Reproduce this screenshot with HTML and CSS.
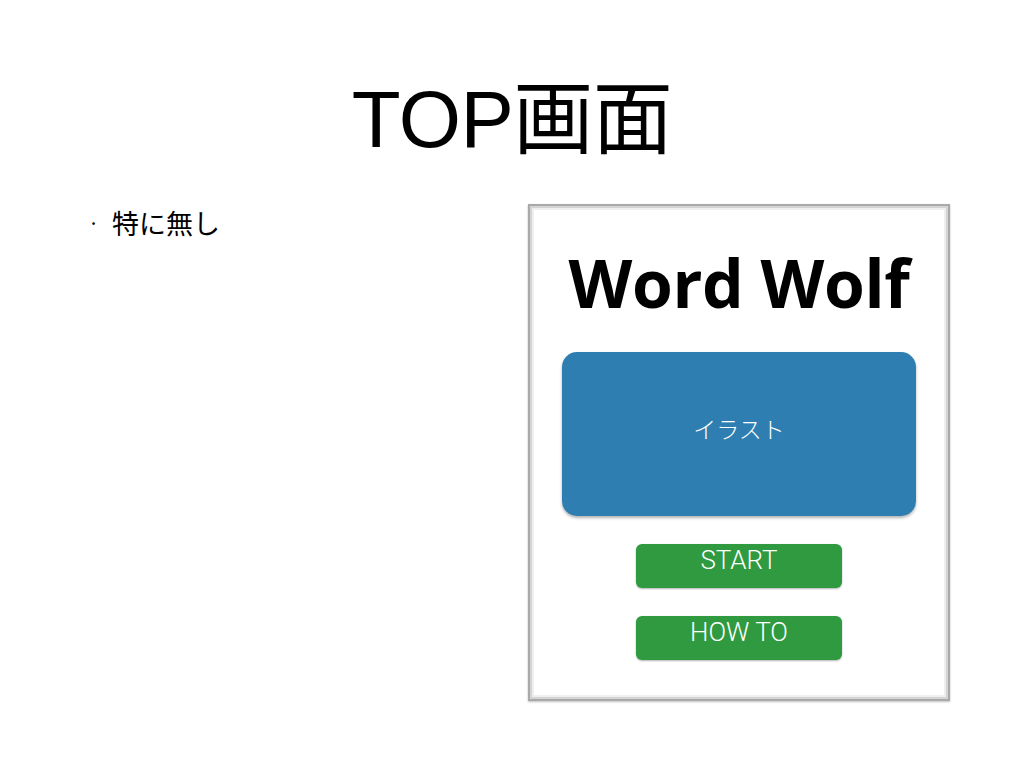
FILE: index.html
```html
<!DOCTYPE html>
<html lang="ja">
<head>
<meta charset="utf-8">
<title>TOP画面</title>
<link rel="stylesheet" href="styles.css">
</head>
<body>
<div class="slide">
  <h1 class="title">TOP画面</h1>
  <div class="content">
    <ul class="notes">
      <li class="note">特に無し</li>
    </ul>
    <div class="frame">
      <div class="app-title">Word Wolf</div>
      <div class="illust">イラスト</div>
      <div class="btn">START</div>
      <div class="btn">HOW TO</div>
    </div>
  </div>
</div>
</body>
</html>
```

FILE: styles.css
```css
html, body {
  margin: 0;
  padding: 0;
  background: #ffffff;
}
.slide {
  width: 1024px;
  height: 768px;
  overflow: hidden;
  font-family: "Liberation Sans", "Noto Sans CJK JP", sans-serif;
  color: #000;
}
.title {
  margin: 0;
  padding-top: 80px;
  height: 124px;
  font-size: 80px;
  line-height: 80px;
  font-weight: normal;
  text-align: center;
  letter-spacing: -0.5px;
}
.content {
  display: flex;
  padding-left: 84px;
}
.notes {
  list-style: none;
  margin: 0;
  padding: 3px 0 0 0;
  width: 444px;
}
.note {
  font-family: "Noto Sans CJK JP", sans-serif;
  font-size: 27px;
  line-height: 32px;
  display: flex;
  align-items: center;
}
.note::before {
  content: "·";
  font-size: 20px;
  width: 28px;
  padding-left: 4px;
  box-sizing: border-box;
}
.frame {
  width: 422px;
  height: 497px;
  box-sizing: border-box;
  border: 2px solid #a9a9a9;
  box-shadow: inset 0 0 0 2px #d4d4d4, inset 0 0 0 4px #efefef, 0 1px 2px rgba(0,0,0,0.25);
  display: flex;
  flex-direction: column;
  align-items: center;
  padding-top: 43px;
}
.app-title {
  font-family: "Open Sans", sans-serif;
  font-weight: 700;
  font-size: 66px;
  line-height: 67px;
  letter-spacing: -0.3px;
  margin-bottom: 36px;
}
.illust {
  width: 354px;
  height: 164px;
  border-radius: 15px;
  background: #2e7eb1;
  box-shadow: 0 2px 3px rgba(0,0,0,0.3);
  color: #fff;
  font-family: "Noto Sans CJK JP", sans-serif;
  font-weight: 300;
  font-size: 23px;
  display: flex;
  align-items: center;
  justify-content: center;
  padding-bottom: 12px;
  box-sizing: border-box;
  margin-bottom: 28px;
}
.btn {
  width: 206px;
  height: 44px;
  box-sizing: border-box;
  padding-top: 3px;
  border-radius: 6px;
  background: #2f9a40;
  box-shadow: 0 1px 2px rgba(0,0,0,0.3);
  color: #fff;
  font-family: Roboto, sans-serif;
  font-weight: 300;
  font-size: 26px;
  line-height: 26px;
  text-align: center;
  margin-bottom: 28px;
}
```
